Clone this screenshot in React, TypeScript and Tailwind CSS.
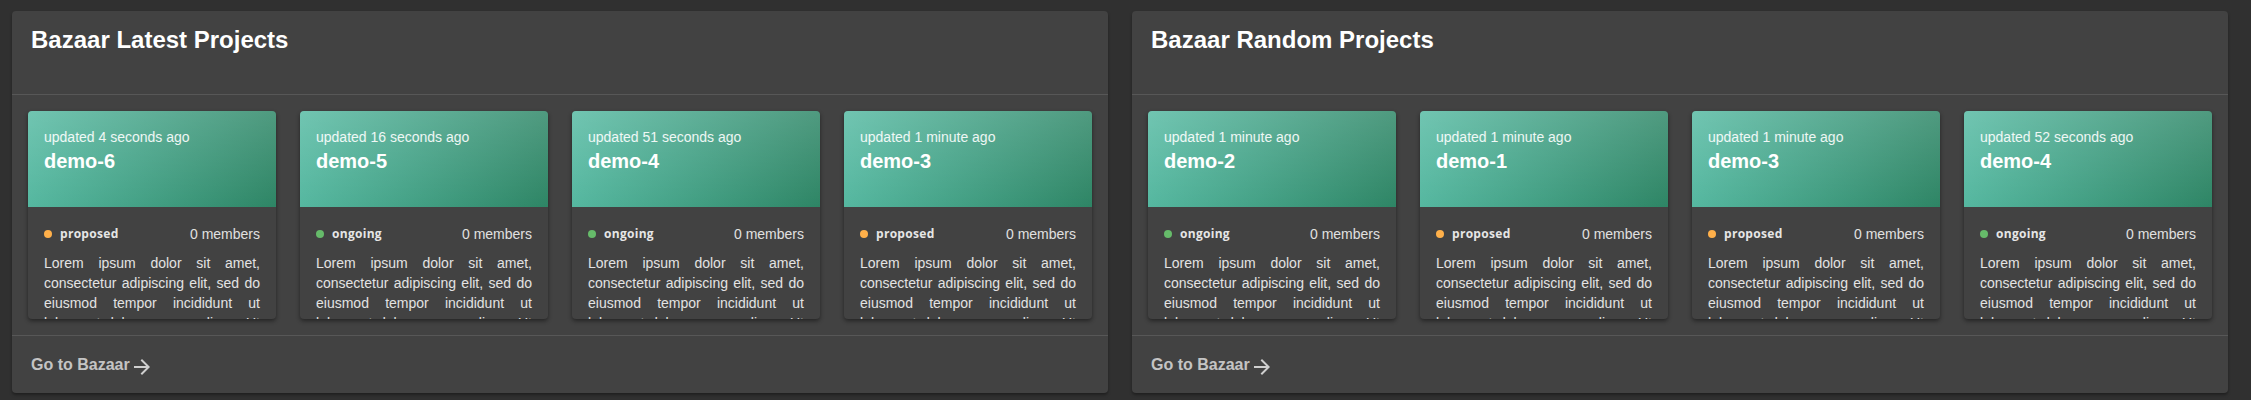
import React from 'react';

type Status = 'proposed' | 'ongoing';

interface Project {
    name: string;
    updated: string;
    status: Status;
    members: number;
}

const LOREM =
    'Lorem ipsum dolor sit amet, consectetur adipiscing elit, sed do eiusmod tempor incididunt ut labore et dolore magna aliqua. Ut enim ad minim veniam, quis nostrud exercitation ullamco laboris nisi ut aliquip ex ea commodo consequat.';

const latest: Project[] = [
    { name: 'demo-6', updated: 'updated 4 seconds ago', status: 'proposed', members: 0 },
    { name: 'demo-5', updated: 'updated 16 seconds ago', status: 'ongoing', members: 0 },
    { name: 'demo-4', updated: 'updated 51 seconds ago', status: 'ongoing', members: 0 },
    { name: 'demo-3', updated: 'updated 1 minute ago', status: 'proposed', members: 0 },
];

const random: Project[] = [
    { name: 'demo-2', updated: 'updated 1 minute ago', status: 'ongoing', members: 0 },
    { name: 'demo-1', updated: 'updated 1 minute ago', status: 'proposed', members: 0 },
    { name: 'demo-3', updated: 'updated 1 minute ago', status: 'proposed', members: 0 },
    { name: 'demo-4', updated: 'updated 52 seconds ago', status: 'ongoing', members: 0 },
];

function ArrowForward() {
    return (
        <svg width="24" height="24" viewBox="0 0 24 24" className="mt-1 fill-[#cfcfcf]">
            <path d="M12 4l-1.41 1.41L16.17 11H4v2h12.17l-5.58 5.59L12 20l8-8z" />
        </svg>
    );
}

function ProjectCard({ project }: { project: Project }) {
    return (
        <div className="w-[248px] h-[208px] rounded overflow-hidden bg-[#424242] shadow-[0_2px_4px_rgba(0,0,0,0.45)] flex flex-col">
            {/* gradient header */}
            <div className="h-[96px] shrink-0 px-4 pt-4 bg-[linear-gradient(180deg,rgba(255,255,255,0.15),rgba(255,255,255,0)),linear-gradient(100deg,#58bba4,#2e8565)]">
                <div className="text-[14px] leading-5 text-white/90">{project.updated}</div>
                <div className="text-[20px] leading-7 font-bold text-white">{project.name}</div>
            </div>
            <div className="px-4 pt-[17px]">
                <div className="flex items-center justify-between h-5">
                    <div className="flex items-center gap-2">
                        <span
                            className={`w-2 h-2 rounded-full ${project.status === 'ongoing' ? 'bg-[#66bb6a]' : 'bg-[#ffb04a]'}`}
                        />
                        <span className="font-['Open_Sans',sans-serif] font-bold text-[12px] tracking-[0.3px] text-[#e6e6e6]">
                            {project.status}
                        </span>
                    </div>
                    <span className="text-[14px] text-[#e0e0e0]">{project.members} members</span>
                </div>
                <p className="mt-[9px] text-[14px] leading-5 text-justify text-[#e3e3e3]">{LOREM}</p>
            </div>
        </div>
    );
}

function Panel({ title, projects }: { title: string; projects: Project[] }) {
    return (
        <div className="w-[1096px] h-[382px] rounded bg-[#424242] shadow-[0_2px_3px_rgba(0,0,0,0.35)] flex flex-col">
            <div className="h-[84px] px-[19px] pt-[13px] border-b border-[#575757]">
                <h2 className="text-[24px] leading-8 font-bold text-white">{title}</h2>
            </div>
            <div className="px-4 py-4 flex gap-6 border-b border-[#575757]">
                {projects.map((p, i) => (
                    <ProjectCard key={i} project={p} />
                ))}
            </div>
            <div className="px-[19px] pt-[15px]">
                <a className="inline-flex items-center text-[16px] leading-6 font-bold text-[#c4c4c4]">
                    Go to Bazaar
                    <ArrowForward />
                </a>
            </div>
        </div>
    );
}

export default function App() {
    return (
        <div className="min-h-[400px] bg-[#303030] pl-3 pt-[11px] flex gap-6 font-['Liberation_Sans',Arial,sans-serif]">
            <Panel title="Bazaar Latest Projects" projects={latest} />
            <Panel title="Bazaar Random Projects" projects={random} />
        </div>
    );
}
